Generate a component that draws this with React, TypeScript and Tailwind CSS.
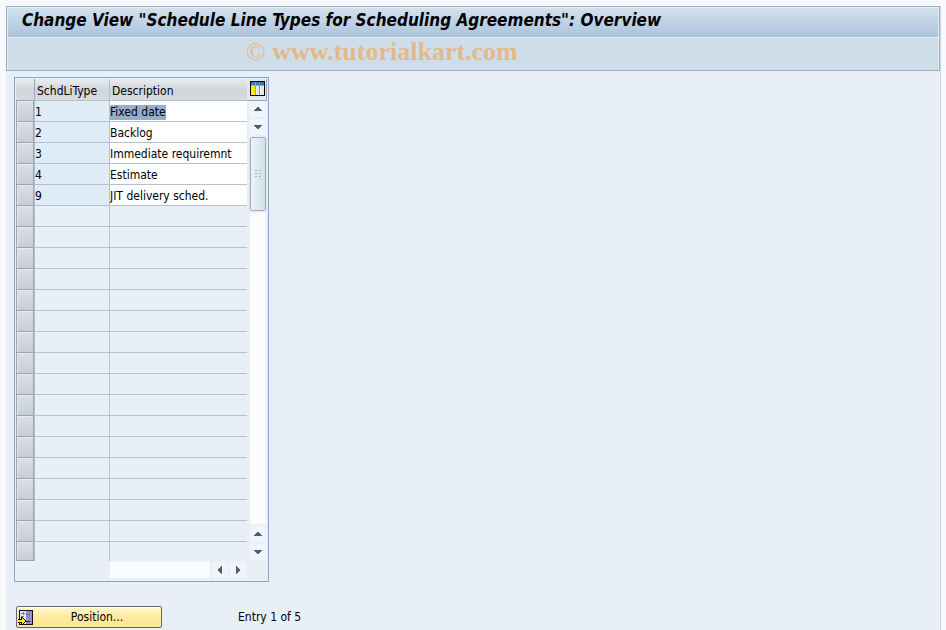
import { useState } from 'react';

interface LineType {
  type: string;
  description: string;
}

const lineTypes: LineType[] = [
  { type: '1', description: 'Fixed date' },
  { type: '2', description: 'Backlog' },
  { type: '3', description: 'Immediate requiremnt' },
  { type: '4', description: 'Estimate' },
  { type: '9', description: 'JIT delivery sched.' },
];

const VISIBLE_ROWS = 22;

const arrowPaths = {
  up: 'M3 0h2v1H3zM2 1h4v1H2zM1 2h6v1H1zM0 3h8v1H0z',
  down: 'M0 0h8v1H0zM1 1h6v1H1zM2 2h4v1H2zM3 3h2v1H3z',
  left: 'M3 0h1v8H3zM2 1h1v6H2zM1 2h1v4H1zM0 3h1v2H0z',
  right: 'M0 0h1v8H0zM1 1h1v6H1zM2 2h1v4H2zM3 3h1v2H3z',
};

function ScrollButton({ direction }: { direction: keyof typeof arrowPaths }) {
  const vertical = direction === 'up' || direction === 'down';
  const w = vertical ? 8 : 4;
  const h = vertical ? 4 : 8;
  return (
    <button
      type="button"
      aria-label={`Scroll ${direction}`}
      className="flex h-4 w-4 shrink-0 items-center justify-center bg-[#f1f5fa]"
    >
      <svg width={w} height={h} viewBox={`0 0 ${w} ${h}`} shapeRendering="crispEdges">
        <path d={arrowPaths[direction]} fill="#4c5f6e" />
      </svg>
    </button>
  );
}

function ConfigIcon() {
  return (
    <svg width="15" height="15" viewBox="0 0 15 15" shapeRendering="crispEdges">
      <rect width="15" height="15" fill="#000" />
      <rect x="1" y="1" width="13" height="13" fill="#fff" />
      <rect x="1" y="1" width="13" height="3" fill="#2f7fbd" />
      <rect x="1" y="4" width="13" height="1" fill="#7fb4dc" />
      <rect x="1" y="5" width="4" height="9" fill="#ffee00" />
      <rect x="5" y="1" width="1" height="13" fill="#8ea2b4" />
      <rect x="6" y="5" width="3" height="9" fill="#e3e8ee" />
      <rect x="9" y="1" width="1" height="13" fill="#6c8ba8" />
      <rect x="11" y="5" width="3" height="9" fill="#e3e8ee" />
    </svg>
  );
}

function PositionIcon() {
  return (
    <svg width="16" height="16" viewBox="0 0 16 16" shapeRendering="crispEdges">
      <rect x="1" y="1" width="14" height="15" fill="#0c1220" />
      <rect x="2" y="2" width="12" height="13" fill="#dfe8f2" />
      <rect x="8" y="2" width="6" height="13" fill="#9090c4" />
      <rect x="8" y="5" width="4" height="1" fill="#6c6ca4" />
      <rect x="8" y="12" width="4" height="1" fill="#1d1d48" />
      <path d="M3 4h4v1H3zM5 3h1v3H5zM3 7h3v1H3z" fill="#6d8494" />
      <path d="M0 10h3V8h2v1h1v1h1v1h1v2H7v1H6v1H5v1H3v-2H0z" fill="#000" />
      <path d="M0 11h4V9h1v1h1v1h1v2H6v1H5v1H4v-2H0z" fill="#ffee00" />
    </svg>
  );
}

function LineTypeTable() {
  const [selected, setSelected] = useState(0);

  return (
    <table className="w-[231px] table-fixed border-separate border-spacing-0">
      <colgroup>
        <col className="w-[19px]" />
        <col className="w-[75px]" />
        <col className="w-[137px]" />
      </colgroup>
      <thead>
        <tr className="h-[22px] bg-linear-to-b from-[#e9edf0] via-[#d0d5db] to-[#d8dce0] text-left">
          <th className="border-r border-b border-[#9ba6b3] p-0" aria-label="Select" />
          <th className="border-r border-b border-[#b4c1d1] p-0 pt-1 pl-0.5 font-normal">SchdLiType</th>
          <th className="border-b border-[#b4c1d1] p-0 pt-1 pl-0.5 font-normal">Description</th>
        </tr>
      </thead>
      <tbody>
        {Array.from({ length: VISIBLE_ROWS }, (_, i) => {
          const row = lineTypes[i];
          const last = i === VISIBLE_ROWS - 1;
          return (
            <tr key={i} className={last ? 'h-[19px]' : 'h-[21px]'}>
              <td className="border-r border-[#b4c1d1] p-0">
                <button
                  type="button"
                  aria-label={`Select row ${i + 1}`}
                  onClick={() => setSelected(i)}
                  className={`block w-[18px] border-r border-b border-l border-[#98a3b3] bg-linear-to-b from-[#dce0e4] to-[#c8ced6] shadow-[inset_1px_1px_0_#e9ecf0] ${last ? 'h-[19px]' : 'h-[21px]'}`}
                />
              </td>
              <td
                className={`border-r border-[#b4c1d1] p-0 pt-0.5 ${last ? '' : 'border-b'} ${row ? 'bg-[#dfebf5]' : ''}`}
              >
                {row?.type}
              </td>
              <td
                className={`border-[#b4c1d1] p-0 pt-0.5 ${last ? '' : 'border-b'} ${row ? 'bg-white' : ''}`}
              >
                {row && (
                  <input
                    type="text"
                    aria-label={`Description of type ${row.type}`}
                    defaultValue={row.description}
                    onFocus={() => setSelected(i)}
                    className={`block h-[15px] max-w-full field-sizing-content outline-none ${selected === i ? 'bg-[#94afce]' : ''}`}
                  />
                )}
              </td>
            </tr>
          );
        })}
      </tbody>
    </table>
  );
}

export default function App() {
  return (
    <div className="flex min-h-screen flex-col bg-[#f7f9fc] pt-1.5 pr-[5px] pl-1.5 font-['DejaVu_Sans_Condensed','DejaVu_Sans',sans-serif] text-xs leading-[15px] text-black">
      <div className="flex-1 border-r border-[#cdd5e2] bg-[#e8eff6]">
        <header className="border border-[#9bafc4] bg-[#cfdde8]">
          <div className="border border-b-0 border-[#e6eff7]">
            <h1 className="h-[29px] truncate bg-linear-to-b from-[#d2e2ed] to-[#abc3dc] pl-3.5 text-[17px] leading-6 font-bold italic">
              Change View "Schedule Line Types for Scheduling Agreements": Overview
            </h1>
            <div className="h-[33px] border-t border-[#e6eff7] pl-[238px] font-['Liberation_Serif',serif] text-[26px] leading-7 text-[#e3b98b]">
              © <span className="font-bold">www.tutorialkart.com</span>
            </div>
          </div>
        </header>

        <main className="pt-1.5 pl-2">
          <div className="inline-block border border-[#8aa6c4] p-px align-top">
            <div className="flex">
              <LineTypeTable />
              <div className="flex w-5 flex-col items-end">
                <button
                  type="button"
                  aria-label="Configuration"
                  className="flex h-[22px] w-full items-center justify-end border-r border-b border-[#9ba6b3] bg-[#e4e8ec] pr-px pb-0.5"
                >
                  <ConfigIcon />
                </button>
                <div className="flex flex-1 flex-col gap-0.5 pr-px pb-px">
                  <ScrollButton direction="up" />
                  <ScrollButton direction="down" />
                  <div className="flex-1 bg-[#fafbfc]">
                    <div className="flex h-[74px] items-center justify-center rounded-xs border border-[#9caebf] bg-linear-to-r from-[#edf3f8] to-[#d3e0eb] shadow-sm">
                      <svg width="6" height="8" viewBox="0 0 6 8" shapeRendering="crispEdges">
                        <path d="M0 0h2v1H0zM4 0h2v1H4zM0 3h2v1H0zM4 3h2v1H4zM0 6h2v1H0zM4 6h2v1H4z" fill="#a5b4c3" />
                      </svg>
                    </div>
                  </div>
                  <ScrollButton direction="up" />
                  <ScrollButton direction="down" />
                </div>
              </div>
            </div>
            <div className="flex items-center gap-0.5 pt-px pr-[21px] pb-0.5 pl-[94px]">
              <div className="h-4 flex-1 bg-[#fafbfc]" />
              <ScrollButton direction="left" />
              <ScrollButton direction="right" />
            </div>
          </div>

          <div className="flex items-center pt-6 pb-0.5 pl-0.5">
            <button
              type="button"
              className="flex h-[22px] w-[146px] items-center rounded-xs border border-[#66666a] bg-linear-to-b from-[#fff7cf] via-[#ffeb9e] to-[#fbe59a] px-px shadow-[inset_0_1px_0_#fffdf0]"
            >
              <PositionIcon />
              <span className="flex-1 pt-px">Position...</span>
            </button>
            <p className="pt-px pl-[76px]">Entry 1 of 5</p>
          </div>
        </main>
      </div>
    </div>
  );
}
